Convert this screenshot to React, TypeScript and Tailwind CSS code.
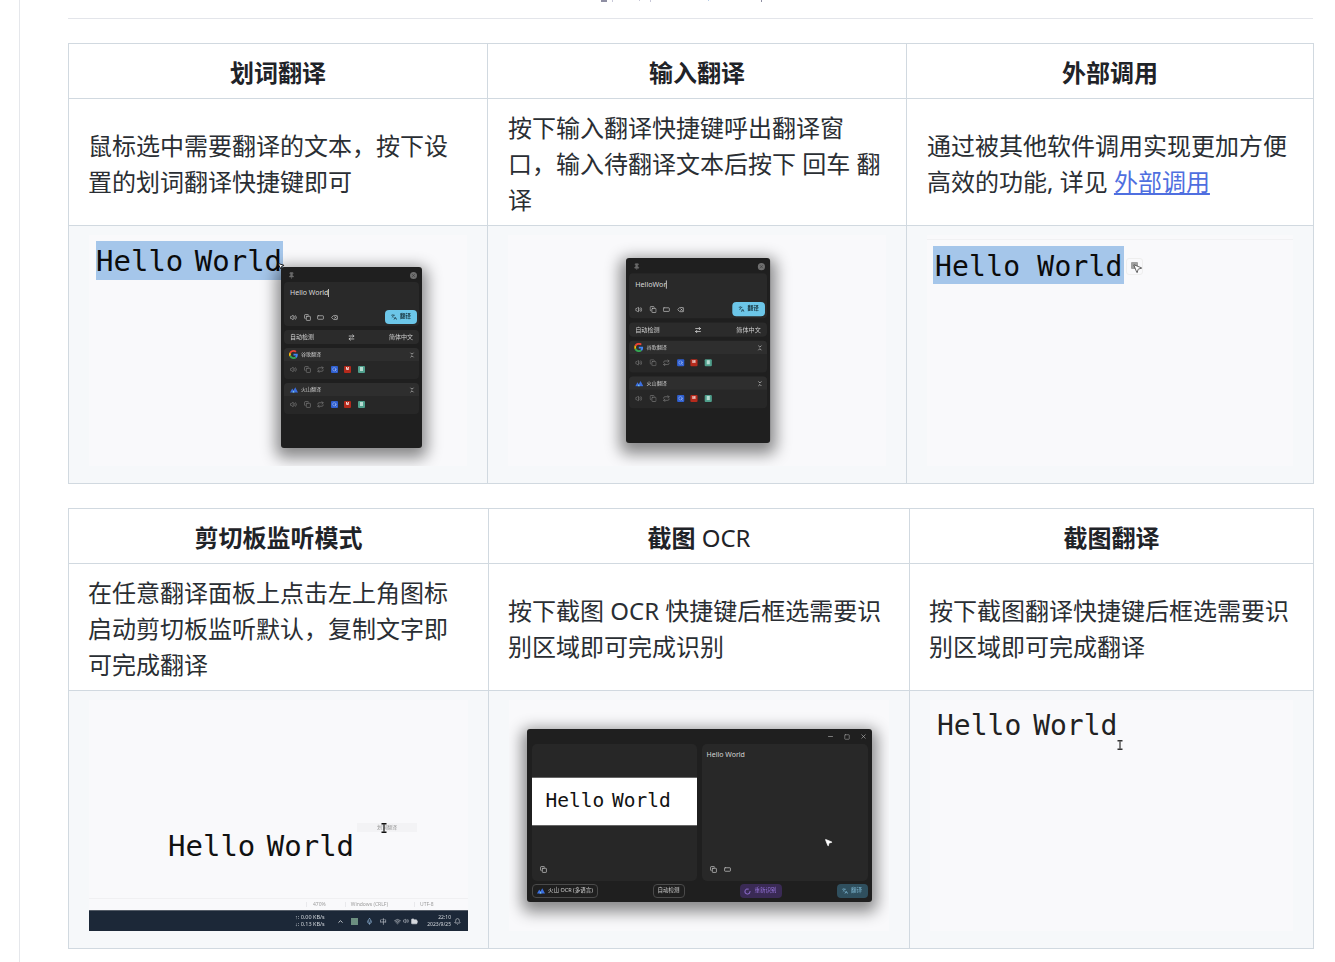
import React from "react";
import { Pin, Volume2, Copy, RectangleHorizontal, Delete, Languages, ArrowRightLeft, ChevronsDownUp, X, Minus, Square, Repeat, MousePointer2, ChevronUp, Mic, Wifi, FolderOpen, Bell, LoaderCircle, Search } from "lucide-react";

const MONO = "font-['DejaVu_Sans_Mono','Liberation_Mono',monospace]";
const WIN_SHADOW = "shadow-[0_5px_15px_5px_rgba(0,0,0,0.45)]";

function GoogleLogo() {
  return (
    <svg viewBox="0 0 48 48" className="w-[9px] h-[9px] shrink-0">
      <path fill="#EA4335" d="M24 9.5c3.5 0 6.7 1.2 9.2 3.6l6.9-6.9C35.9 2.4 30.5 0 24 0 14.6 0 6.5 5.4 2.6 13.2l8 6.2C12.5 13.7 17.8 9.5 24 9.5z" />
      <path fill="#4285F4" d="M46.9 24.5c0-1.6-.1-3.1-.4-4.5H24v9h12.9c-.6 3-2.2 5.5-4.7 7.2l7.7 6c4.5-4.2 7-10.3 7-17.7z" />
      <path fill="#FBBC05" d="M10.5 28.6c-.5-1.4-.8-3-.8-4.6s.3-3.2.8-4.6l-8-6.2C.9 16.5 0 20.1 0 24s.9 7.5 2.6 10.8l7.9-6.2z" />
      <path fill="#34A853" d="M24 48c6.5 0 11.9-2.1 15.9-5.8l-7.7-6c-2.2 1.4-4.9 2.3-8.2 2.3-6.2 0-11.5-4.2-13.4-9.9l-8 6.2C6.5 42.6 14.6 48 24 48z" />
    </svg>
  );
}

function VolcLogo() {
  return (
    <svg viewBox="0 0 16 12" className="w-[8px] h-[6px] shrink-0 mx-[0.5px]">
      <path fill="#3b6fe0" d="M0 11 L4.5 3 L7 7 L10.5 0.5 L16 11 Z" />
      <path fill="#7fd0e8" d="M5 11 L7 7 L9 11 Z" />
    </svg>
  );
}

function IBeam({ className, color = "#111" }: { className: string; color?: string }) {
  return (
    <svg viewBox="0 0 6 10" className={className}>
      <path d="M0.5 0.7H5.5M3 0.7V9.3M0.5 9.3H5.5" stroke={color} strokeWidth="1.6" fill="none" />
      <path d="M3 1.2V8.8" stroke="#fff" strokeWidth="0.5" fill="none" />
    </svg>
  );
}

function ServiceBadges() {
  return (
    <div className="flex items-center gap-[6.5px] px-[6px] pt-[4.5px]">
      <Volume2 size={7} className="text-[#787878]" strokeWidth={2.4} />
      <Copy size={7} className="text-[#787878]" strokeWidth={2.4} />
      <Repeat size={7} className="text-[#787878]" strokeWidth={2.4} />
      <div className="w-[7px] h-[7px] bg-[#2f5fd0] rounded-[1px] flex items-center justify-center"><Search size={5} className="text-[#cfe0ff]" /></div>
      <div className="w-[7px] h-[7px] bg-[#b52a1c] rounded-[1px] flex items-center justify-center text-[3.5px] leading-none text-white font-bold">M</div>
      <div className="w-[7px] h-[7px] bg-[#4f9f8c] rounded-[1px] flex items-center justify-center"><div className="w-[3px] h-[4px] bg-[#b7dcd2]" /></div>
    </div>
  );
}

function ServiceCard({ logo, name }: { logo: React.ReactNode; name: string }) {
  return (
    <div className="h-[31px] rounded-[4px] bg-[#272727] flex flex-col">
      <div className="h-[13px] bg-[#2e2e2e] rounded-t-[4px] flex items-center gap-[3px] pl-[5px] pr-[4px]">
        {logo}
        <span className="text-[5px] leading-none text-[#c8c8c8] flex-1">{name}</span>
        <ChevronsDownUp size={6} className="text-[#e0e0e0]" strokeWidth={2.5} />
      </div>
      <ServiceBadges />
    </div>
  );
}

function TranslateWindow({ text, className }: { text: string; className: string }) {
  return (
    <div className={`absolute w-[141px] h-[181px] bg-[#1f1f1f] rounded-[3px] ${WIN_SHADOW} flex flex-col px-[3px] gap-[4px] blur-[0.35px] ${className}`}>
      <div className="h-[11px] mt-[3px] -mb-[3px] flex items-center justify-between pl-[4px] pr-[2px]">
        <Pin size={7} className="text-[#6a6a6a]" fill="#6a6a6a" />
        <div className="w-[7px] h-[7px] rounded-full bg-[#6f6f6f] flex items-center justify-center"><X size={5} className="text-[#2a2a2a]" /></div>
      </div>
      <div className="h-[44px] bg-[#292929] rounded-[4px] flex flex-col justify-between pb-[2px]">
        <div className="pl-[6px] pt-[6px] text-[7px] leading-[10px] text-[#d9d9d9] flex items-center">{text}<span className="w-px h-[8px] bg-[#bbb]" /></div>
        <div className="flex items-center pl-[6px] pr-[2px]">
          <div className="flex gap-[6.5px] flex-1 text-[#c4c4c4]">
            <Volume2 size={7} strokeWidth={2.4} />
            <Copy size={7} strokeWidth={2.4} />
            <RectangleHorizontal size={7} strokeWidth={2.4} />
            <Delete size={7} strokeWidth={2.4} />
          </div>
          <div className="w-[32px] h-[14px] rounded-[4px] bg-[#6cc6e8] flex items-center justify-center gap-[3px] text-[#17323c]">
            <Languages size={6} />
            <span className="text-[5.5px] leading-none font-bold">翻译</span>
          </div>
        </div>
      </div>
      <div className="h-[14px] bg-[#2b2b2b] rounded-[4px] flex items-center justify-between px-[6px] text-[6px] leading-none text-[#d0d0d0]">
        <span>自动检测</span>
        <ArrowRightLeft size={7} className="text-[#e0e0e0]" strokeWidth={2.5} />
        <span>简体中文</span>
      </div>
      <ServiceCard logo={<GoogleLogo />} name="谷歌翻译" />
      <ServiceCard logo={<VolcLogo />} name="火山翻译" />
    </div>
  );
}

function Canvas({ children }: { children?: React.ReactNode }) {
  return <div className="relative w-full max-w-[380px] h-[231px] bg-[#f9f9fb] overflow-hidden">{children}</div>;
}

function Demo1() {
  return (
    <Canvas>
      <div className={`absolute left-[7px] top-[6px] h-[39px] w-[187px] bg-[#a5c6ea] text-[29px] leading-[41px] [word-spacing:-6px] text-[#0b0b0b] whitespace-nowrap ${MONO}`}>Hello World</div>
      <TranslateWindow text="Hello World" className="left-[192px] top-[32px]" />
      <MousePointer2 size={8} className="absolute left-[188px] top-[27px] -rotate-6 text-black" fill="#fff" strokeWidth={2.5} />
    </Canvas>
  );
}

function Demo2() {
  return (
    <Canvas>
      <TranslateWindow text="HelloWor" className="left-[118px] top-[23px] origin-top-left scale-[1.022]" />
    </Canvas>
  );
}

function Demo3() {
  return (
    <Canvas>
      <div className="absolute left-0 right-0 top-[4px] h-px bg-[#f1f1f3]" />
      <div className={`absolute left-[6px] top-[11px] h-[38px] w-[191px] bg-[#a5c6ea] text-[28px] leading-[41px] tracking-[0.2px] text-[#0b0b0b] pl-[2px] whitespace-nowrap ${MONO}`}>Hello World</div>
      <div className="absolute left-[199px] top-[23px] w-[17px] h-[17px] rounded-[3px] border border-[#eeeeee] flex items-start justify-start pl-[4px] pt-[3px]">
        <div className="w-[7px] h-[7px] bg-[#a0a0a0] rounded-[1px]" />
      </div>
      <MousePointer2 size={11} className="absolute left-[205px] top-[28px] text-[#222]" fill="#fff" strokeWidth={1.5} />
    </Canvas>
  );
}

function Demo4() {
  return (
    <Canvas>
      <div className={`absolute left-[79px] top-[127px] text-[29px] leading-[39px] [word-spacing:-6px] text-[#111] whitespace-nowrap ${MONO}`}>Hello World</div>
      <div className="absolute left-[268px] top-[123px] w-[60px] h-[9px] bg-[#f3f3f5] text-[5px] leading-[9px] text-center text-[#9a9a9a] blur-[0.4px]">划词翻译</div>
      <IBeam className="absolute left-[292px] top-[123px] w-[6px] h-[10px]" />
      <div className="absolute left-0 right-0 bottom-[32px] h-px bg-[#f0f0f2]" />
      <div className="absolute left-0 right-0 bottom-[21px] h-[11px] flex items-center text-[5px] leading-none text-[#9c9c9c] font-['Noto_Sans',sans-serif] blur-[0.2px]">
        <span className="ml-[217px] pl-[6px] border-l border-[#e9e9ec]">470%</span>
        <span className="ml-[19px] pl-[5px] border-l border-[#e9e9ec]">Windows (CRLF)</span>
        <span className="ml-[26px] pl-[5px] border-l border-[#e9e9ec]">UTF-8</span>
      </div>
      <div className="absolute left-0 right-0 bottom-0 h-[21px] bg-[#1c2838] border-t border-[#555d68] flex items-center text-[#d5d9de] font-['Noto_Sans',sans-serif] blur-[0.2px]">
        <div className="ml-[206px] w-[30px] text-[5.5px] leading-[7px] whitespace-nowrap">
          <div>↑: 0.00 KB/s</div>
          <div>↓: 0.13 KB/s</div>
        </div>
        <ChevronUp size={7} className="ml-[12px]" strokeWidth={3} />
        <div className="ml-[7px] w-[7px] h-[7px] bg-[#6c8f80]" />
        <Mic size={7} className="ml-[8px] text-[#9cc4e8]" />
        <span className="ml-[7px] text-[7px] leading-none">中</span>
        <Wifi size={7} className="ml-[7px]" />
        <Volume2 size={6} className="ml-[2px]" />
        <FolderOpen size={7} className="ml-[2px]" fill="#d5d9de" />
        <div className="ml-[8px] w-[25px] text-[5px] leading-[7px] text-right whitespace-nowrap">
          <div>22:10</div>
          <div>2023/9/25</div>
        </div>
        <Bell size={7} className="ml-[3px]" />
      </div>
    </Canvas>
  );
}

function Demo5() {
  const chip = "h-[14px] rounded-[4px] flex items-center justify-center text-[5.5px] leading-none";
  return (
    <Canvas>
      <div className={`absolute left-[18px] top-[29px] w-[345px] h-[173px] bg-[#1f1f1f] rounded-[3px] ${WIN_SHADOW} flex flex-col px-[4.5px] blur-[0.35px]`}>
        <div className="h-[15px] flex items-center justify-end gap-[10px] pr-px text-[#bbb]">
          <Minus size={7} />
          <Square size={6} />
          <X size={7} />
        </div>
        <div className="flex gap-[5px] h-[137px]">
          <div className="w-[165px] rounded-[5px] bg-[#272727] flex flex-col relative overflow-hidden">
            <div className="mt-[33px] h-[49px] bg-white border-y border-[#666] pl-[14px] text-[19.5px] leading-[45px] [word-spacing:-4px] text-[#111] whitespace-nowrap font-['DejaVu_Sans_Mono',monospace]">Hello World</div>
            <Copy size={7} className="absolute left-[8px] bottom-[8px] text-[#ccc]" strokeWidth={2.4} />
          </div>
          <div className="w-[166px] rounded-[5px] bg-[#282828] relative px-[5px] pt-[5px]">
            <div className="text-[7px] leading-[12px] text-[#d5d5d5]">Hello World</div>
            <div className="absolute left-[8px] bottom-[8px] flex gap-[7px] text-[#ccc]">
              <Copy size={7} strokeWidth={2.4} />
              <RectangleHorizontal size={7} strokeWidth={2.4} />
            </div>
          </div>
        </div>
        <div className="flex items-center justify-between mt-[3px]">
          <div className={`${chip} w-[66px] border border-[#4a4a4a] text-[#d0d0d0] gap-[3px]`}><VolcLogo /><span>火山 OCR (多语言)</span></div>
          <div className={`${chip} w-[32px] border border-[#4a4a4a] text-[#d0d0d0]`}>自动检测</div>
          <div className={`${chip} w-[42px] bg-[#3a2a55] text-[#9a77e0] gap-[3px]`}><LoaderCircle size={7} strokeWidth={3} /><span>重新识别</span></div>
          <div className={`${chip} w-[31px] bg-[#2f4f5e] text-[#7fb9d4] gap-[3px]`}><Languages size={6} /><span>翻译</span></div>
        </div>
      </div>
      <MousePointer2 size={9} className="absolute left-[315px] top-[138px] text-white" fill="#fff" />
    </Canvas>
  );
}

function Demo6() {
  return (
    <Canvas>
      <div className={`absolute left-[7px] top-[7px] text-[28px] leading-[38px] [word-spacing:-5px] text-[#222] whitespace-nowrap ${MONO}`}>Hello World</div>
      <IBeam className="absolute left-[187px] top-[40px] w-[6px] h-[10px]" color="#333" />
    </Canvas>
  );
}

function Table({ cols, heads, bodies, demos, pads }: { cols: [string, string, string]; heads: React.ReactNode[]; bodies: React.ReactNode[]; demos: React.ReactNode[]; pads: [string, string, string] }) {
  const th = "border border-[#d1d9e0] h-[55px] px-[20px] pt-[4px] text-[24px] leading-[36px] font-bold text-center text-[#1f2328]";
  const td = "border border-[#d1d9e0] h-[127px] pr-[20px] pt-[4px] text-[24px] leading-[36px] font-normal text-[#2a2e33] align-middle";
  const im = "border border-[#d1d9e0] h-[258px] px-[20px] pt-[9px] pb-[17px] bg-[#f6f8fa] align-top";
  return (
    <table className="w-full table-fixed border-collapse">
      <colgroup>
        <col className={cols[0]} />
        <col className={cols[1]} />
        <col className={cols[2]} />
      </colgroup>
      <thead>
        <tr>{heads.map((h, i) => <th key={i} className={th}>{h}</th>)}</tr>
      </thead>
      <tbody>
        <tr>{bodies.map((b, i) => <td key={i} className={`${td} ${pads[i]}`}>{b}</td>)}</tr>
        <tr>{demos.map((d, i) => <td key={i} className={im}>{d}</td>)}</tr>
      </tbody>
    </table>
  );
}

export default function App() {
  return (
    <div className="h-[962px] overflow-hidden bg-white font-['Noto_Sans','Noto_Sans_CJK_SC',sans-serif]">
      <div className="ml-[19px] h-full border-l border-[#e5e7eb] pl-[48px] pr-[22px]">
        <div className="h-[19px] border-b border-[#e3e5ea] flex items-start">
          <div className="ml-[533px] w-[6px] h-[2px] bg-[#8f8fa3]" />
          <div className="ml-[5px] w-px h-[2px] bg-[#c8c8d8]" />
          <div className="ml-[26px] w-px h-px bg-[#c8c8d8]" />
          <div className="ml-[10px] w-px h-[2px] bg-[#c8c8d8]" />
          <div className="ml-[57px] w-px h-px bg-[#b8cfe8]" />
          <div className="ml-[52px] w-px h-[2px] bg-[#8f8fa3]" />
        </div>
        <div className="mt-[24px]">
          <Table
            cols={["w-[419px]", "w-[419px]", "w-[407px]"]}
            pads={["pl-[19px]", "pl-[20px]", "pl-[20px]"]}
            heads={["划词翻译", "输入翻译", "外部调用"]}
            bodies={[
              "鼠标选中需要翻译的文本，按下设置的划词翻译快捷键即可",
              "按下输入翻译快捷键呼出翻译窗口，输入待翻译文本后按下 回车 翻译",
              <>通过被其他软件调用实现更加方便高效的功能, 详见 <a className="text-[#4f6fe0] underline">外部调用</a></>,
            ]}
            demos={[<Demo1 />, <Demo2 />, <Demo3 />]}
          />
        </div>
        <div className="mt-[24px]">
          <Table
            cols={["w-[420px]", "w-[421px]", "w-[404px]"]}
            pads={["pl-[19px]", "pl-[19px]", "pl-[19px]"]}
            heads={["剪切板监听模式", <>截图 <span className="font-normal">OCR</span></>, "截图翻译"]}
            bodies={[
              "在任意翻译面板上点击左上角图标启动剪切板监听默认，复制文字即可完成翻译",
              "按下截图 OCR 快捷键后框选需要识别区域即可完成识别",
              "按下截图翻译快捷键后框选需要识别区域即可完成翻译",
            ]}
            demos={[<Demo4 />, <Demo5 />, <Demo6 />]}
          />
        </div>
      </div>
    </div>
  );
}
